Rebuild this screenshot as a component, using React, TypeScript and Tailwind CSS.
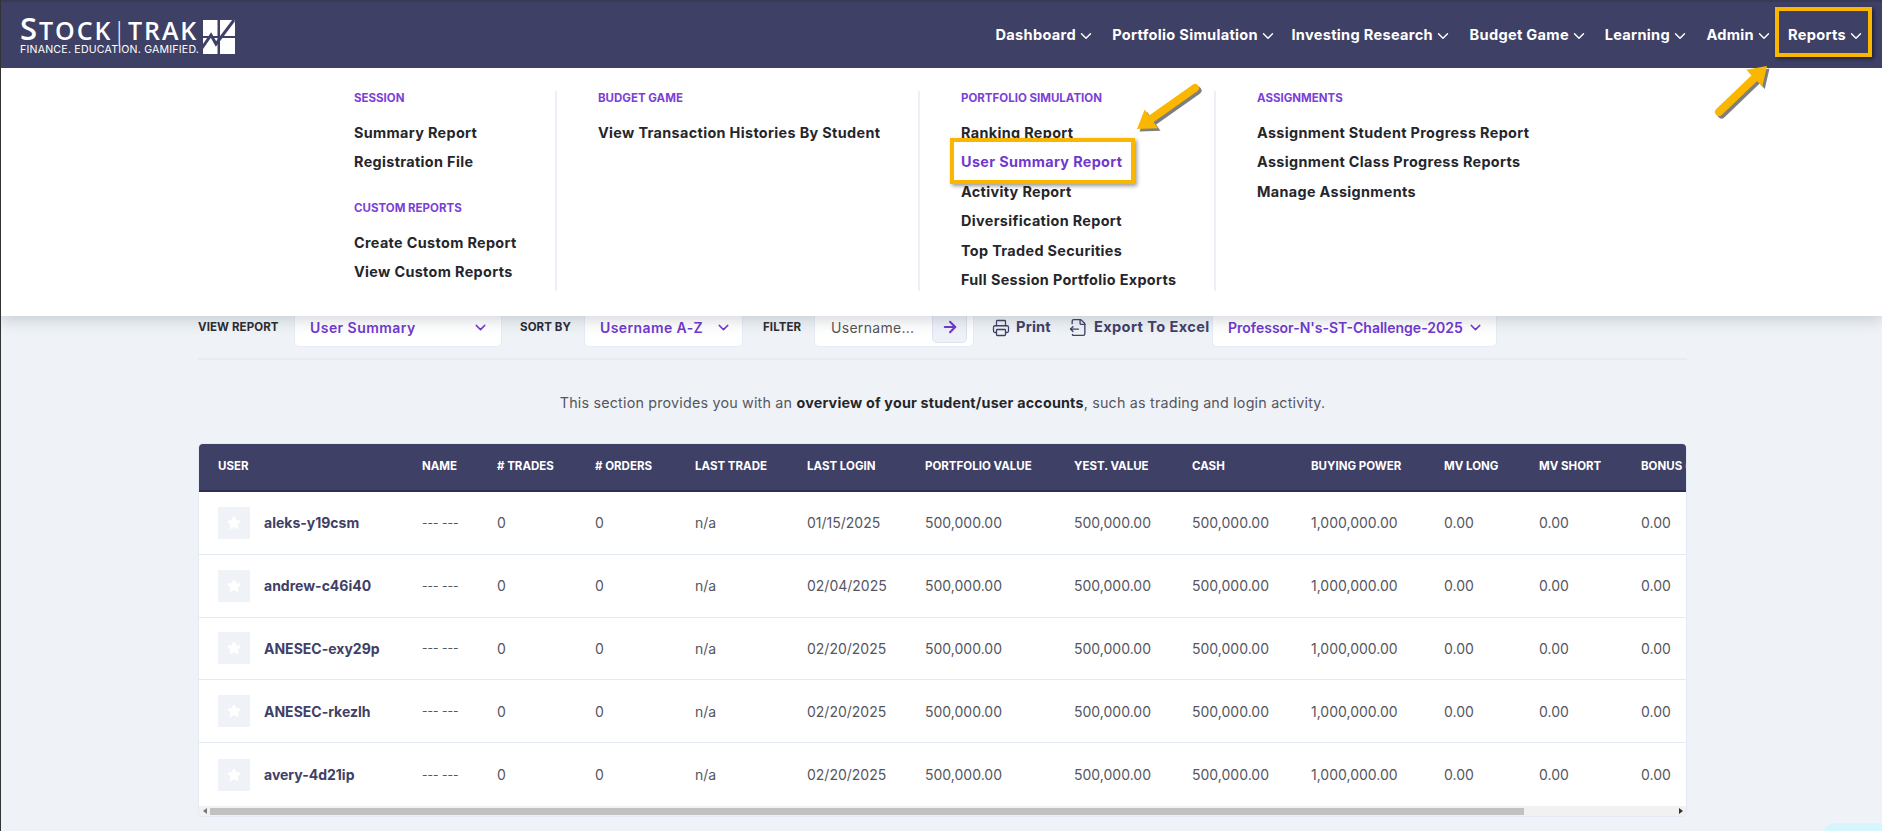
import { ChevronDown, Printer, FileOutput, ArrowRight, Star } from "lucide-react";

const nav = [
  ["Dashboard", "w-[115px]"],
  ["Portfolio Simulation", "w-[182px]"],
  ["Investing Research", "w-[175px]"],
  ["Budget Game", "w-[136px]"],
  ["Learning", "w-[101px]"],
  ["Admin", "w-[84px]"],
  ["Reports", "w-[92px]"],
];

const users = [
  ["aleks-y19csm", "01/15/2025"],
  ["andrew-c46i40", "02/04/2025"],
  ["ANESEC-exy29p", "02/20/2025"],
  ["ANESEC-rkezlh", "02/20/2025"],
  ["avery-4d21ip", "02/20/2025"],
];

const cols = "grid grid-cols-[204px_75px_98px_100px_112px_118px_149px_118px_119px_133px_95px_102px_100px] pl-[19px] items-center w-[1523px]";
const heads = ["USER", "NAME", "# TRADES", "# ORDERS", "LAST TRADE", "LAST LOGIN", "PORTFOLIO VALUE", "YEST. VALUE", "CASH", "BUYING POWER", "MV LONG", "MV SHORT", "BONUS (%)"];

function Head({ children }: { children: string }) {
  return <div className="text-[#7c3fd8] text-[11.5px] font-bold leading-[14px]">{children}</div>;
}
function Link({ children, active }: { children: string; active?: boolean }) {
  return <div className={`h-[29.5px] flex items-center text-[14.4px] font-bold whitespace-nowrap tracking-[0.35px] ${active ? "text-[#7038d0]" : "text-[#25262b]"}`}>{children}</div>;
}
function Label({ children, className }: { children: string; className: string }) {
  return <div className={`text-[11.5px] font-bold text-[#2b2b33] whitespace-nowrap tracking-[0.1px] pt-[1px] ${className}`}>{children}</div>;
}
function Select({ children, className, text }: { children: string; className: string; text: string }) {
  return (
    <div className={`h-full bg-white rounded-b-[5px] border border-[#e6ebf5] flex items-center justify-between ${className}`}>
      <span className={`text-[14px] font-semibold text-[#7038d0] whitespace-nowrap ${text}`}>{children}</span>
      <ChevronDown className="text-[#7038d0]" size={17} strokeWidth={2} />
    </div>
  );
}

function Arrow({ x1, y1, x2, y2 }: { x1: number; y1: number; x2: number; y2: number }) {
  const a = Math.atan2(y2 - y1, x2 - x1);
  const len = 21;
  const spread = 0.58;
  const bx = x2 - Math.cos(a) * 12;
  const by = y2 - Math.sin(a) * 12;
  const p1 = [x2 - Math.cos(a - spread) * len, y2 - Math.sin(a - spread) * len];
  const p2 = [x2 - Math.cos(a + spread) * len, y2 - Math.sin(a + spread) * len];
  return (
    <g>
      <g transform="translate(2.5 2.5)" fill="#000" stroke="#000" opacity="0.5">
        <line x1={x1} y1={y1} x2={bx} y2={by} strokeWidth="8" strokeLinecap="round" />
        <polygon points={`${x2},${y2} ${p1[0]},${p1[1]} ${p2[0]},${p2[1]}`} strokeWidth="0" />
      </g>
      <line x1={x1} y1={y1} x2={bx} y2={by} stroke="#fbb600" strokeWidth="8" strokeLinecap="round" />
      <polygon points={`${x2},${y2} ${p1[0]},${p1[1]} ${p2[0]},${p2[1]}`} fill="#fbb600" />
    </g>
  );
}

export default function App() {
  return (
    <div className="relative w-full h-[831px] overflow-hidden bg-[#eff3f7] font-['Inter',sans-serif]">
      <header className="h-[68px] bg-[#3f4066] border-t-2 border-[#383a55] flex items-center justify-between pl-5 relative z-20">
        <div className="flex items-center gap-[4px] mt-[1px]">
          <div className="text-white">
            <div className="font-['Open_Sans',sans-serif] font-semibold text-[25px] leading-[26px] tracking-[1.95px] whitespace-nowrap h-[25px]">
              <span className="text-[31px]">S</span>TOCK<span className="font-light">|</span>TRAK
            </div>
            <div className="mt-[4px] text-[10.6px] leading-[12px] tracking-[0.2px] whitespace-nowrap">FINANCE. EDUCATION. GAMIFIED.</div>
          </div>
          <svg width="32" height="34" viewBox="0 0 32 34" className="mt-[2px]">
            <rect x="0" y="0" width="14.5" height="16" fill="#fff" />
            <rect x="17" y="0" width="15" height="16" fill="#fff" />
            <rect x="0" y="18" width="14.5" height="16" fill="#fff" />
            <rect x="17" y="18" width="15" height="16" fill="#fff" />
            <polyline points="-1,28 8,15 13,24 31,0" fill="none" stroke="#3f4066" strokeWidth="3" />
          </svg>
        </div>
        <nav className="flex items-center justify-end pr-[21px] pt-[2px] flex-1">
          {nav.map(([n, w]) => (
            <div key={n} className={`${w} flex items-center justify-end whitespace-nowrap text-white text-[14.6px] font-bold tracking-[0.3px]`}>
              <span>{n}</span>
              <ChevronDown size={18} strokeWidth={1.9} className="ml-[1px] -mr-[4px]" />
            </div>
          ))}
        </nav>
      </header>

      <div className="absolute top-[68px] left-0 right-0 h-[248px] bg-white shadow-[0_4px_14px_rgba(60,70,90,0.22)] z-10 flex pl-[354px] pt-[23px]">
        <div className="w-[203px] h-[200px] border-r-2 border-[#eef0f8]">
          <Head>SESSION</Head>
          <div className="mt-[13px]">
            <Link>Summary Report</Link>
            <Link>Registration File</Link>
          </div>
          <div className="mt-[24px]"><Head>CUSTOM REPORTS</Head></div>
          <div className="mt-[13px]">
            <Link>Create Custom Report</Link>
            <Link>View Custom Reports</Link>
          </div>
        </div>
        <div className="w-[363px] h-[200px] pl-[41px] border-r-2 border-[#eef0f8]">
          <Head>BUDGET GAME</Head>
          <div className="mt-[13px]"><Link>View Transaction Histories By Student</Link></div>
        </div>
        <div className="w-[296px] h-[200px] pl-[41px] border-r-2 border-[#eef0f8]">
          <Head>PORTFOLIO SIMULATION</Head>
          <div className="mt-[13px]">
            <Link>Ranking Report</Link>
            <Link active>User Summary Report</Link>
            <Link>Activity Report</Link>
            <Link>Diversification Report</Link>
            <Link>Top Traded Securities</Link>
            <Link>Full Session Portfolio Exports</Link>
          </div>
        </div>
        <div className="pl-[41px]">
          <Head>ASSIGNMENTS</Head>
          <div className="mt-[13px]">
            <Link>Assignment Student Progress Report</Link>
            <Link>Assignment Class Progress Reports</Link>
            <Link>Manage Assignments</Link>
          </div>
        </div>
      </div>

      <main className="ml-[198px] w-[1489px] pt-[239px]">
        <div className="h-[53px] pb-[11px] pr-[190px] flex items-center border-b-2 border-[#e6ebf5]">
          <Label className="w-[96px]">VIEW REPORT</Label>
          <Select className="w-[208px] pl-[15px] pr-[12px]" text="tracking-[0.45px]">User Summary</Select>
          <Label className="w-[64px] ml-[18px]">SORT BY</Label>
          <Select className="w-[159px] pl-[15px] pr-[10px]" text="tracking-[0.4px]">Username A-Z</Select>
          <Label className="w-[51px] ml-[20px]">FILTER</Label>
          <div className="relative h-full w-[160px] bg-white rounded-b-[5px] border border-[#e6ebf5] flex items-center pl-[16px] text-[14px] text-[#555] tracking-[0.3px]">
            Username...
            <div className="absolute right-[6px] top-[-1px] bottom-[3px] w-[35px] bg-[#eef2f8] border border-[#dde3f0] rounded-b-[5px] flex items-center justify-center pt-[4px]">
              <ArrowRight size={18} strokeWidth={2.75} className="text-[#7038d0]" />
            </div>
          </div>
          <Printer size={18} strokeWidth={1.7} className="ml-[18px] mt-[1px] text-[#3f4066]" />
          <span className="ml-[6px] pt-[2px] text-[14.6px] font-bold text-[#3f4066] tracking-[0.2px]">Print</span>
          <FileOutput size={19} strokeWidth={1.7} className="ml-[18px] mt-[1px] text-[#3f4066]" />
          <span className="ml-[6px] pt-[2px] text-[14.6px] font-bold text-[#3f4066] whitespace-nowrap tracking-[0.4px]">Export To Excel</span>
          <Select className="w-[285px] ml-auto pl-[15px] pr-[12px]" text="">Professor-N's-ST-Challenge-2025</Select>
        </div>

        <p className="text-center text-[14.3px] text-[#55565f] mt-[33px] leading-[20px] tracking-[0.2px]">
          This section provides you with an <b className="font-bold text-[#25262b]">overview of your student/user accounts</b>, such as trading and login activity.
        </p>

        <div className="mt-[30px] w-full h-[374px] rounded-[5px] border border-[#e3e9f5] overflow-hidden bg-white">
          <div className="h-[48px] bg-[#3f4066] border-b-2 border-[#2f3050] overflow-hidden">
            <div className={`${cols} h-full`}>
              {heads.map((h) => (
                <div key={h} className="text-white text-[11.5px] font-bold whitespace-nowrap">{h}</div>
              ))}
            </div>
          </div>
          {users.map(([u, d], i) => (
            <div key={u} className={`${cols} h-[62.8px] text-[14px] text-[#55565f] ${i < 4 ? "border-b border-[#e3e9f5]" : ""}`}>
              <div className="flex items-center gap-[14px]">
                <div className="w-8 h-8 bg-[#eff3f7] flex items-center justify-center">
                  <Star size={14} className="text-white" fill="#fff" />
                </div>
                <span className="font-bold text-[#3f4066]">{u}</span>
              </div>
              <div className="text-[12px]">--- ---</div>
              <div>0</div>
              <div>0</div>
              <div>n/a</div>
              <div>{d}</div>
              <div>500,000.00</div>
              <div>500,000.00</div>
              <div>500,000.00</div>
              <div>1,000,000.00</div>
              <div>0.00</div>
              <div>0.00</div>
              <div>0.00</div>
            </div>
          ))}
          <div className="h-[11px] bg-[#f1f1f1] flex items-center">
            <div className="w-[11px] flex justify-center"><div className="w-0 h-0 border-y-[3px] border-y-transparent border-r-[4px] border-r-[#777]" /></div>
            <div className="flex-1 h-[7px]"><div className="h-full w-[1314px] bg-[#c1c1c1]" /></div>
            <div className="w-[11px] flex justify-center"><div className="w-0 h-0 border-y-[3px] border-y-transparent border-l-[4px] border-l-[#333]" /></div>
          </div>
        </div>
      </main>

      <div className="absolute left-[1822px] top-[823px] w-[60px] h-[30px] rounded-tl-[14px] bg-[#d6f5fd]" />

      {/* annotations */}
      <div className="absolute z-30 left-[1775px] top-[7px] w-[97px] h-[50px] border-[4px] border-[#fbb600] shadow-[2px_2px_4px_rgba(0,0,0,0.5)]" />
      <div className="absolute z-30 left-[950px] top-[138px] w-[185px] h-[46px] border-[4px] border-[#fbb600] shadow-[2px_2px_4px_rgba(0,0,0,0.4)]" />
      <svg className="absolute z-30 left-0 top-0 pointer-events-none" width="1882" height="831">
        <Arrow x1={1719} y1={112} x2={1767} y2={66} />
        <Arrow x1={1195} y1={88} x2={1137} y2={129} />
      </svg>
      <div className="absolute left-0 top-0 bottom-0 w-px bg-[#333] z-40" />
    </div>
  );
}
